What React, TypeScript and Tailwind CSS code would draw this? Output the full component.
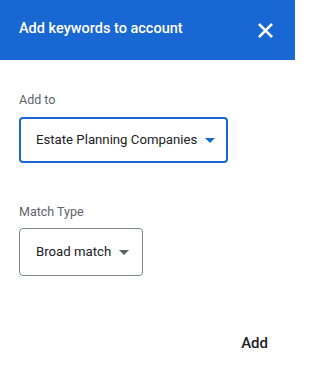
export default function App() {
    return (
        <div className="w-[295px] h-[370px] bg-white flex flex-col overflow-hidden" style={{ fontFamily: "Roboto, 'Liberation Sans', sans-serif" }}>
            {/* Header */}
            <div className="h-[60px] bg-[#1967d2] flex items-center justify-between pl-[19px] pr-[22px] pb-[3px]">
                <span className="text-[14.5px] font-medium text-white whitespace-nowrap">Add keywords to account</span>
                <svg width="15" height="15" viewBox="0 0 16 16" className="mt-[3px] shrink-0">
                    <path d="M2 2L14 14M14 2L2 14" stroke="white" strokeWidth="2.8" strokeLinecap="square" />
                </svg>
            </div>

            {/* Body */}
            <div className="flex flex-col px-[19px] pt-[32px]">
                <span className="text-[12.5px] leading-[16px] text-[#5f6368]">Add to</span>
                <div className="mt-[9px] w-[209px] h-[46px] border-2 border-[#1a67d2] rounded-[4px] flex items-center pl-[15px] gap-[8px]">
                    <span className="text-[13.2px] text-[#202124] whitespace-nowrap">Estate Planning Companies</span>
                    <svg width="10" height="5" viewBox="0 0 10 5" className="shrink-0">
                        <path d="M0 0L10 0L5 5Z" fill="#1a67d2" />
                    </svg>
                </div>

                <span className="mt-[41px] text-[12.5px] leading-[16px] text-[#5f6368]">Match Type</span>
                <div className="mt-[8px] w-[124px] h-[48px] border border-[#80868b] rounded-[4px] flex items-center pl-[16px] gap-[8px]">
                    <span className="text-[13.2px] text-[#202124] whitespace-nowrap">Broad match</span>
                    <svg width="10" height="5" viewBox="0 0 10 5" className="shrink-0">
                        <path d="M0 0L10 0L5 5Z" fill="#5f6368" />
                    </svg>
                </div>
            </div>

            <div className="flex justify-end pr-[27px] mt-[57px]">
                <span className="text-[15px] leading-[20px] font-medium text-[#202124]">Add</span>
            </div>
        </div>
    )
}
